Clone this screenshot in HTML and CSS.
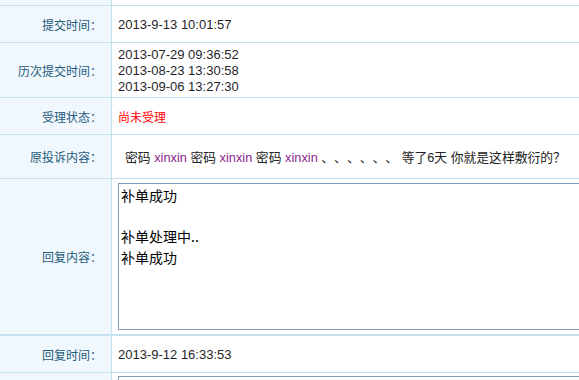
FILE: index.html
```html
<!DOCTYPE html>
<html lang="zh-CN">
<head>
<meta charset="utf-8">
<title>投诉详情</title>
<link rel="stylesheet" href="styles.css">
</head>
<body>
<div class="sheet">
  <div class="row r0"><div class="lab"></div><div class="val"></div></div>
  <div class="row r1"><div class="lab">提交时间：</div><div class="val num">2013-9-13 10:01:57</div></div>
  <div class="row r2"><div class="lab">历次提交时间：</div><div class="val num lines">2013-07-29 09:36:52<br>2013-08-23 13:30:58<br>2013-09-06 13:27:30</div></div>
  <div class="row r1"><div class="lab">受理状态：</div><div class="val red">尚未受理</div></div>
  <div class="row r4"><div class="lab">原投诉内容：</div><div class="val orig"><span class="txt">密码 <span class="kw">xinxin</span> 密码 <span class="kw">xinxin</span> 密码 <span class="kw">xinxin</span> 、、、、、、 等了6天 你就是这样敷衍的？</span></div></div>
  <div class="row r5"><div class="lab">回复内容：</div><div class="val"><textarea class="box" readonly>补单成功

补单处理中..
补单成功</textarea></div></div>
  <div class="row r1"><div class="lab">回复时间：</div><div class="val num">2013-9-12 16:33:53</div></div>
  <div class="row r7"><div class="lab"></div><div class="val top"><textarea class="box" readonly></textarea></div></div>
</div>
</body>
</html>
```
FILE: styles.css
```css
html, body {
  margin: 0;
  padding: 0;
  background: #ffffff;
  overflow: hidden;
}
.sheet {
  width: 579px;
  font-family: "Liberation Sans", "Noto Sans CJK SC", sans-serif;
  font-size: 12px;
  color: #222222;
  text-spacing-trim: space-all;
}
.row {
  display: grid;
  grid-template-columns: 112px 1fr;
  border-bottom: 1px solid #c3e1ee;
}
.lab {
  background: #f1f8fd;
  border-right: 1px solid #c3e1ee;
  color: #1d5a7c;
  text-align: right;
  padding-right: 9px;
  display: flex;
  align-items: center;
  justify-content: flex-end;
  font-family: "Noto Sans CJK SC", sans-serif;
}
.val {
  padding-left: 6px;
  display: flex;
  align-items: center;
  white-space: nowrap;
  overflow: hidden;
}
.num {
  font-size: 13px;
  color: #1f1f2a;
}
.r0 { height: 5px; }
.r1 { height: 36px; }
.r2 { height: 54px; }
.r4 { height: 43px; }
.r5 { height: 155px; border-bottom-width: 2px; }
.r7 { height: 20px; border-bottom: none; }
.lines {
  display: block;
  line-height: 16px;
  padding-top: 4px;
}
.red { color: #ff0000; font-family: "Noto Sans CJK SC", sans-serif; }
.orig { padding-left: 13px; }
.txt { white-space: pre; font-size: 12.8px; }
.kw { color: #8a1f8c; }
.box {
  width: 520px;
  height: 147px;
  margin: 0;
  padding: 1px 2px;
  box-sizing: border-box;
  border: 1px solid #7f9db9;
  font-family: "Noto Sans CJK SC", sans-serif;
  font-size: 14px;
  line-height: 20.5px;
  color: #000;
  resize: none;
  overflow: hidden;
  display: block;
  flex-shrink: 0;
  text-spacing-trim: space-all;
}
.top { align-items: flex-start; padding-top: 3px; }
```
